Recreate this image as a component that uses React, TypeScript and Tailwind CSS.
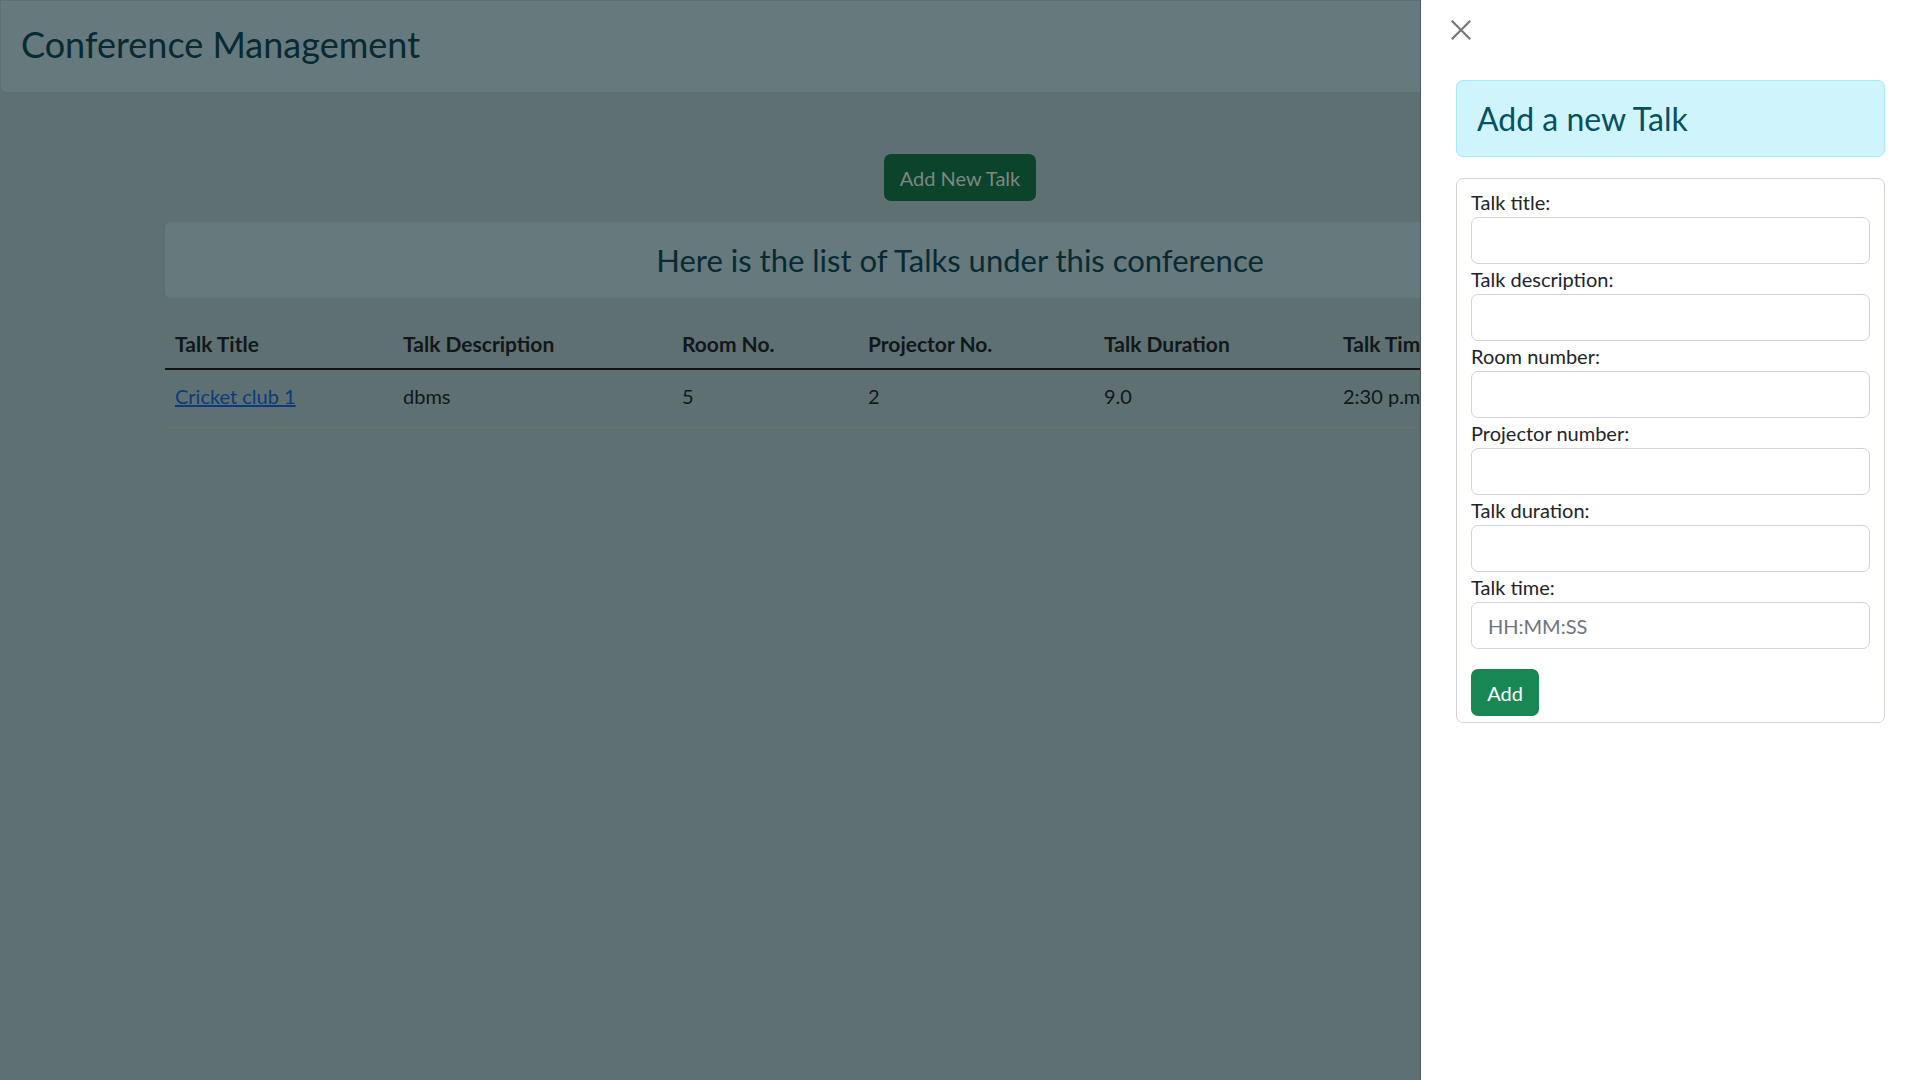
const font = { fontFamily: '"Segoe UI", Lato, "Open Sans", sans-serif' };

const talks = [
  {
    title: 'Cricket club 1',
    description: 'dbms',
    room: '5',
    projector: '2',
    duration: '9.0',
    time: '2:30 p.m.',
  },
];

const fields = [
  { label: 'Talk title:', placeholder: '' },
  { label: 'Talk description:', placeholder: '' },
  { label: 'Room number:', placeholder: '' },
  { label: 'Projector number:', placeholder: '' },
  { label: 'Talk duration:', placeholder: '' },
  { label: 'Talk time:', placeholder: 'HH:MM:SS' },
];

export default function App() {
  return (
    <div className="min-h-screen w-[1920px] bg-[#5e7072] overflow-hidden" style={font}>
      {/* header */}
      <header className="mt-px ml-px h-[91px] bg-[#66797c] rounded-b-[6px] flex items-center pb-[5px] pl-[20px]">
        <h2 className="text-[36px] leading-[44px] text-[#082a31] font-normal">Conference Management</h2>
      </header>

      <main className="w-[1590px] mx-auto pt-[62px]">
        <div className="flex justify-center">
          <button className="h-[47px] w-[152px] bg-[#0c432b] text-[#7f8683] text-[20px] leading-[30px] rounded-[7px]">
            Add New Talk
          </button>
        </div>

        <div className="mt-[21px] h-[76px] bg-[#66797c] rounded-[6px] flex items-center justify-center">
          <h4 className="text-[31px] leading-[38px] text-[#092a31] font-normal">
            Here is the list of Talks under this conference
          </h4>
        </div>

        <table className="mt-[21px] w-full table-fixed border-collapse text-[20px] leading-[30px] text-[#121719]">
          <colgroup>
            <col className="w-[228px]" />
            <col className="w-[279px]" />
            <col className="w-[186px]" />
            <col className="w-[236px]" />
            <col className="w-[239px]" />
            <col />
          </colgroup>
          <thead>
            <tr className="border-b-2 border-[#101416]">
              {['Talk Title', 'Talk Description', 'Room No.', 'Projector No.', 'Talk Duration', 'Talk Time'].map((h) => (
                <th key={h} className="text-left font-bold text-[21px] px-[10px] h-[50px] align-middle">
                  {h}
                </th>
              ))}
            </tr>
          </thead>
          <tbody>
            {talks.map((t) => (
              <tr key={t.title} className="border-b border-[#6c7274] h-[58px]">
                <td className="px-[10px] align-top pt-[11px]">
                  <a href="#" className="text-[#0b3a7e] underline">
                    {t.title}
                  </a>
                </td>
                <td className="px-[10px] align-top pt-[11px]">{t.description}</td>
                <td className="px-[10px] align-top pt-[11px]">{t.room}</td>
                <td className="px-[10px] align-top pt-[11px]">{t.projector}</td>
                <td className="px-[10px] align-top pt-[11px]">{t.duration}</td>
                <td className="px-[10px] align-top pt-[11px]">{t.time}</td>
              </tr>
            ))}
          </tbody>
        </table>
      </main>

      {/* offcanvas */}
      <aside className="fixed top-0 right-0 h-screen w-[500px] bg-white border-l border-[#4b5a5c] flex flex-col">
        <div className="h-[80px] pl-[30px] pt-[20px]">
          <svg width="20" height="20" viewBox="0 0 20 20" fill="none" stroke="#777777" strokeWidth="2.2" strokeLinecap="square">
            <path d="M1.5 1.5 L18.5 18.5 M18.5 1.5 L1.5 18.5" />
          </svg>
        </div>
        <div className="px-[35px]">
          <div className="h-[77px] bg-[#cff4fc] border border-[#a6e9f7] rounded-[7px] pl-[20px] flex items-center">
            <h3 className="text-[32px] leading-[40px] text-[#055160] font-normal">Add a new Talk</h3>
          </div>

          <form className="mt-[21px] border border-[#cfd4da] rounded-[7px] px-[14px] pt-[8px] pb-[6px]">
            {fields.map((f) => (
              <div key={f.label}>
                <label className="block text-[20px] leading-[30px] h-[30px] text-[#212529]">{f.label}</label>
                <input
                  type="text"
                  placeholder={f.placeholder}
                  className="block w-full h-[47px] border border-[#ced4da] rounded-[7px] px-[16px] text-[20px] text-[#212529] placeholder:text-[#6c757d] outline-none"
                />
              </div>
            ))}
            <button
              type="button"
              className="mt-[20px] h-[47px] w-[68px] bg-[#198754] text-white text-[20px] leading-[30px] rounded-[7px]"
            >
              Add
            </button>
          </form>
        </div>
      </aside>
    </div>
  );
}
